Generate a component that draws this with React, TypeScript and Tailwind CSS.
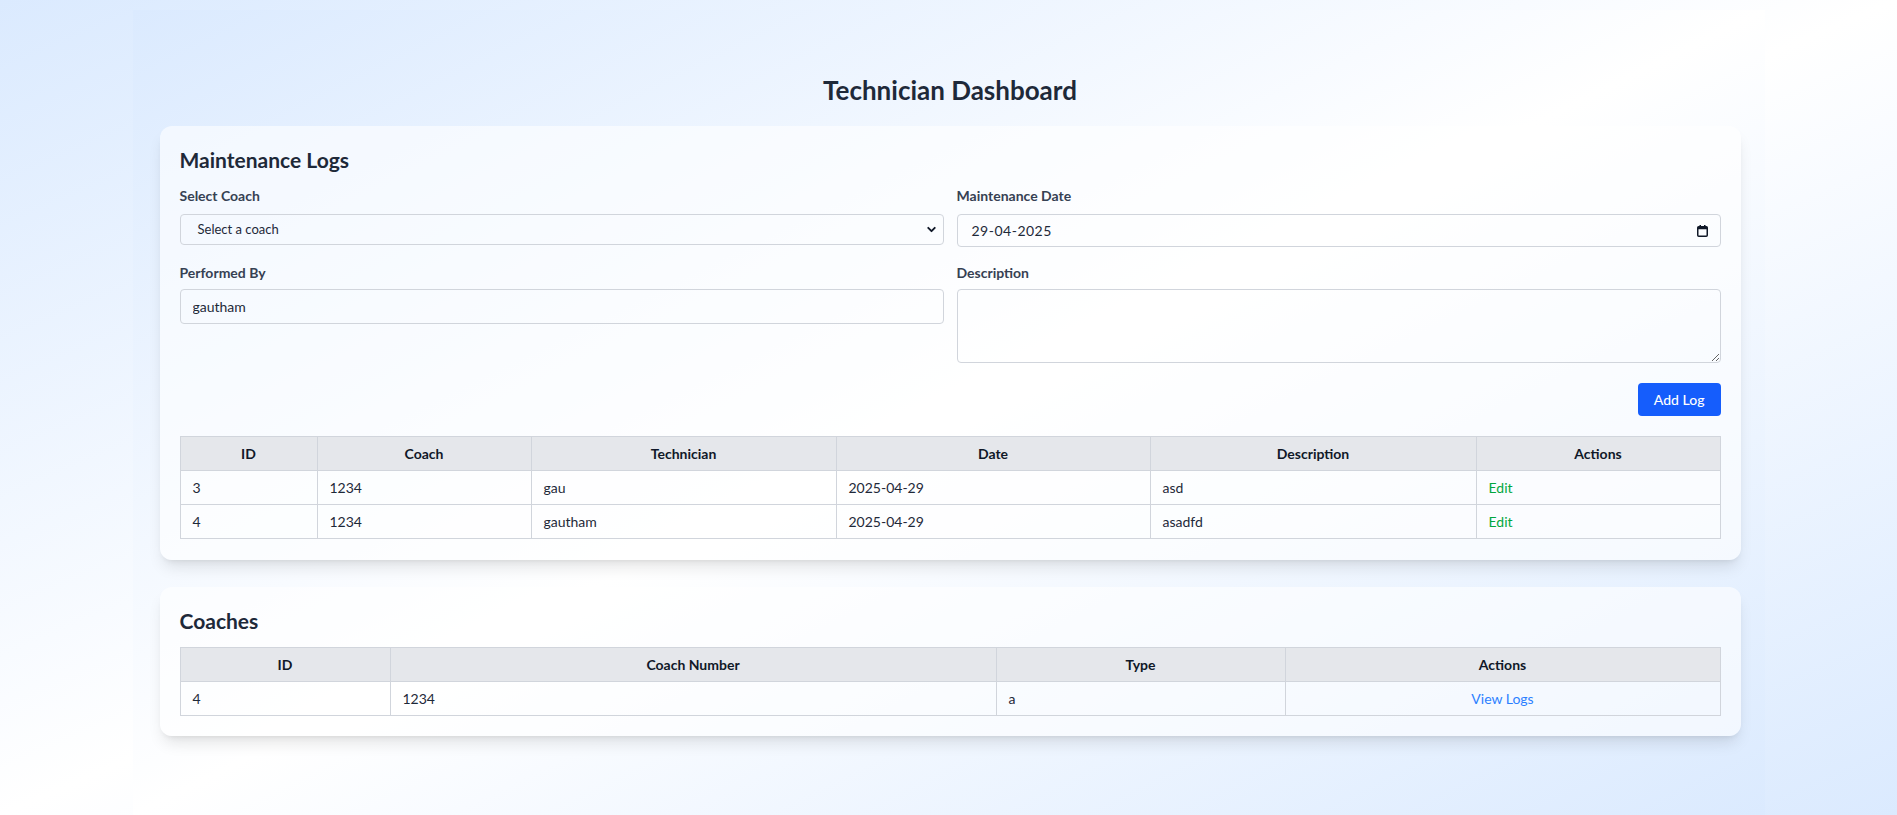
import { ChevronDown } from "lucide-react"

const logs = [
  { id: 3, coach: "1234", tech: "gau", date: "2025-04-29", desc: "asd" },
  { id: 4, coach: "1234", tech: "gautham", date: "2025-04-29", desc: "asadfd" },
]

const coaches = [{ id: 4, number: "1234", type: "a" }]

const th = "border border-gray-300 bg-gray-200 px-3 py-1.5 leading-[21px] font-bold text-gray-900 text-center"
const td = "border border-gray-300 px-3 py-1.5 leading-[21px] text-gray-800"

function CalendarIcon() {
  return (
    <svg width="11" height="12" viewBox="0 0 11 12" className="text-gray-900">
      <rect x="0.75" y="1.75" width="9.5" height="9.5" rx="1" fill="none" stroke="currentColor" strokeWidth="1.5" />
      <rect x="0.75" y="1.75" width="9.5" height="2.5" fill="currentColor" />
      <rect x="2.5" y="0" width="1.5" height="2" fill="currentColor" />
      <rect x="7" y="0" width="1.5" height="2" fill="currentColor" />
    </svg>
  )
}

export default function App() {
  return (
    <div className="min-h-screen bg-linear-to-br from-blue-100 via-white to-blue-100 pt-2.5 font-[Lato,sans-serif]">
      <div className="mx-auto w-[1632px] min-h-[805px] bg-linear-to-br from-blue-100 via-white to-blue-100 pl-[27px] pr-[24px] pt-[64px] pb-10">
        <h1 className="mb-5 text-center text-[26px] leading-8 font-bold text-gray-800">Technician Dashboard</h1>

        {/* maintenance logs */}
        <div className="rounded-xl bg-white/60 px-5 pt-5 pb-[21px] shadow-lg">
          <h2 className="mb-3 text-[21px] leading-7 font-bold text-gray-800">Maintenance Logs</h2>
          <div className="grid grid-cols-2 gap-x-[13px] gap-y-4 items-start">
            <div>
              <label className="mb-2 block text-sm font-bold text-gray-700">Select Coach</label>
              <div className="flex h-[31px] items-center justify-between rounded border border-gray-300 pl-[17px] pr-[5px] text-[13px] text-gray-800">
                <span>Select a coach</span>
                <ChevronDown size={13} strokeWidth={3.5} className="text-gray-900" />
              </div>
            </div>
            <div>
              <label className="mb-2 block text-sm font-bold text-gray-700">Maintenance Date</label>
              <div className="flex h-[33px] items-center justify-between rounded border border-gray-300 pl-[14px] pr-3 text-sm text-gray-800">
                <span className="tracking-[0.5px]">29-04-2025</span>
                <CalendarIcon />
              </div>
            </div>
            <div>
              <label className="mb-[6px] block text-sm font-bold text-gray-700">Performed By</label>
              <input
                readOnly
                value="gautham"
                className="h-[35px] w-full rounded border border-gray-300 bg-transparent px-3 text-sm text-gray-800 outline-none"
              />
            </div>
            <div>
              <label className="mb-[6px] block text-sm font-bold text-gray-700">Description</label>
              <textarea className="block h-[74px] w-full rounded border border-gray-300 bg-transparent px-3 py-2 text-sm outline-none" />
            </div>
          </div>
          <div className="mt-5 mb-5 flex justify-end">
            <button className="h-[33px] rounded bg-blue-600 px-4 text-sm font-medium text-white">Add Log</button>
          </div>

          <table className="w-full table-fixed border-collapse text-sm">
            <colgroup>
              <col className="w-[137px]" />
              <col className="w-[214px]" />
              <col className="w-[305px]" />
              <col className="w-[314px]" />
              <col className="w-[326px]" />
              <col className="w-[244px]" />
            </colgroup>
            <thead>
              <tr>
                <th className={th}>ID</th>
                <th className={th}>Coach</th>
                <th className={th}>Technician</th>
                <th className={th}>Date</th>
                <th className={th}>Description</th>
                <th className={th}>Actions</th>
              </tr>
            </thead>
            <tbody>
              {logs.map((l) => (
                <tr key={l.id} className="bg-white/40">
                  <td className={td}>{l.id}</td>
                  <td className={td}>{l.coach}</td>
                  <td className={td}>{l.tech}</td>
                  <td className={td}>{l.date}</td>
                  <td className={td}>{l.desc}</td>
                  <td className={td}>
                    <span className="text-green-600">Edit</span>
                  </td>
                </tr>
              ))}
            </tbody>
          </table>
        </div>

        {/* coaches */}
        <div className="mt-[27px] rounded-xl bg-white/60 p-5 shadow-lg">
          <h2 className="mb-3 text-[21px] leading-7 font-bold text-gray-800">Coaches</h2>
          <table className="w-full table-fixed border-collapse text-sm">
            <colgroup>
              <col className="w-[210px]" />
              <col className="w-[606px]" />
              <col className="w-[289px]" />
              <col className="w-[435px]" />
            </colgroup>
            <thead>
              <tr>
                <th className={th}>ID</th>
                <th className={th}>Coach Number</th>
                <th className={th}>Type</th>
                <th className={th}>Actions</th>
              </tr>
            </thead>
            <tbody>
              {coaches.map((c) => (
                <tr key={c.id}>
                  <td className={td}>{c.id}</td>
                  <td className={td}>{c.number}</td>
                  <td className={td}>{c.type}</td>
                  <td className={`${td} text-center`}>
                    <span className="text-blue-500">View Logs</span>
                  </td>
                </tr>
              ))}
            </tbody>
          </table>
        </div>
      </div>
    </div>
  )
}
